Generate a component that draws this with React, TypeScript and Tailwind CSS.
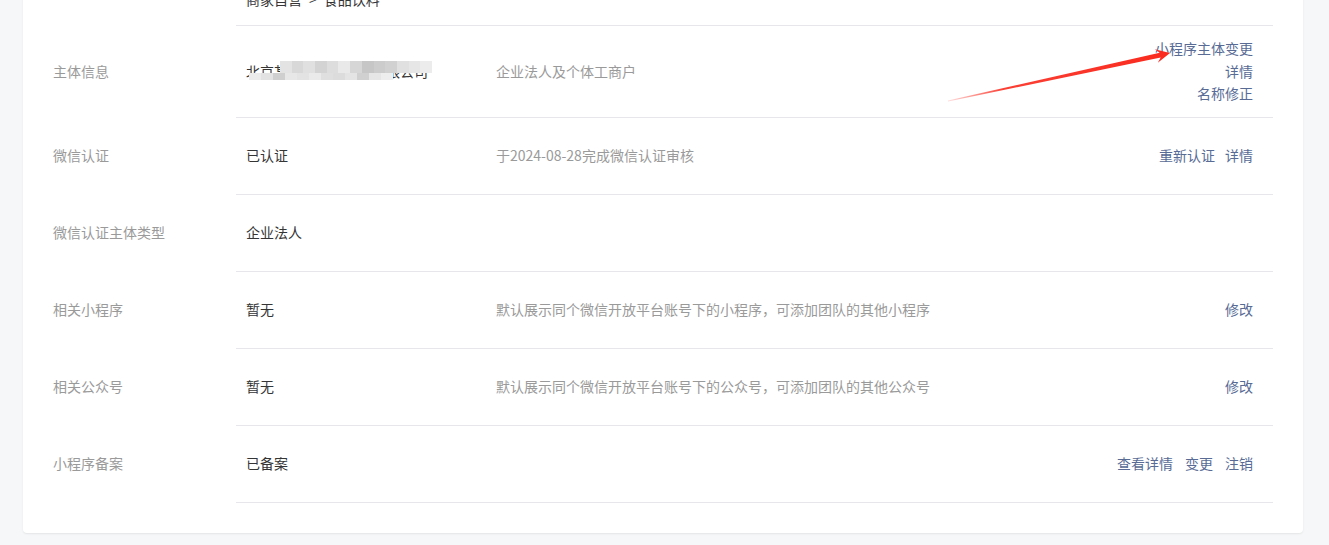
import React from "react";

const font = { fontFamily: '"Noto Sans CJK SC", "Noto Sans", sans-serif' };

function Row({
  label,
  value,
  desc,
  actions,
  className = "h-[77px]",
  children,
}: {
  label?: string;
  value?: React.ReactNode;
  desc?: string;
  actions?: React.ReactNode;
  className?: string;
  children?: React.ReactNode;
}) {
  return (
    <div className={"flex " + className}>
      <div className="w-[213px] shrink-0 pl-[30px] pb-[2px] flex items-center text-[14px] text-[#9a9a9a]">
        {label}
      </div>
      <div className="flex-1 mr-[30px] border-b border-[#e7e7eb] pl-[10px] pr-[20px] pb-[1px] flex items-center">
        {children ?? (
          <>
            <div className="w-[250px] shrink-0 text-[14px] text-[#353535]">{value}</div>
            <div className="flex-1 text-[14px] text-[#9a9a9a]">{desc}</div>
            <div className="text-[14px] text-[#576b95] flex">{actions}</div>
          </>
        )}
      </div>
    </div>
  );
}

const mosaicTop = ["#e3e3e3", "#d8d8d8", "#e0e0e0", "#d3d3d3", "#dddddd", "#e9e9e9", "#d6d6d6", "#c6c6c6", "#cccccc", "#d1d1d1", "#e0e0e0", "#e6e6e6", "#ececec"];
const mosaicBot = ["#ebebeb", "#e2e2e2", "#cfcfcf", "#e7e7e7", "#e3e3e3", "#eaeaea", "#dfdfdf", "#dcdcdc", "#e4e4e4", "#d0d0d0", "#e6e6e6", "#eeeeee"];

export default function App() {
  return (
    <div className="relative h-[545px] w-[1329px] overflow-hidden bg-[#f6f7f9]" style={font}>
      <div className="ml-[23px] mt-[-40px] w-[1280px] rounded-[4px] bg-white pb-[30px] shadow-[0_1px_2px_rgba(0,0,0,0.08)]">
        <Row className="h-[66px]">
          <div className="self-start pt-[29px] text-[14px] leading-[20px] text-[#353535] flex">
            <span>商家自营</span>
            <span className="mx-[7px]">&gt;</span>
            <span>食品饮料</span>
          </div>
        </Row>
        <Row
          label="主体信息"
          className="h-[92px]"
          value={
            <div className="relative w-[190px] leading-[20px]">
              <span>北京某某某某某某某有限公司</span>
              <div className="absolute left-[3px] top-[0px] w-[183px] h-[19px]">
                <div className="flex ml-[31px] h-[12px]">
                  {mosaicTop.map((c, i) => (
                    <div key={i} className="w-[12px] h-full" style={{ background: c }} />
                  ))}
                </div>
                <div className="flex h-[7px]">
                  {mosaicBot.map((c, i) => (
                    <div key={i} className="w-[12px] h-full" style={{ background: c }} />
                  ))}
                </div>
              </div>
            </div>
          }
          desc="企业法人及个体工商户"
          actions={
            <div className="flex flex-col items-end leading-[22.5px]">
              <span>小程序主体变更</span>
              <span>详情</span>
              <span>名称修正</span>
            </div>
          }
        />
        <Row
          label="微信认证"
          value="已认证"
          desc="于2024-08-28完成微信认证审核"
          actions={
            <>
              <span>重新认证</span>
              <span className="ml-[10px]">详情</span>
            </>
          }
        />
        <Row label="微信认证主体类型" value="企业法人" />
        <Row
          label="相关小程序"
          value="暂无"
          desc="默认展示同个微信开放平台账号下的小程序，可添加团队的其他小程序"
          actions={<span>修改</span>}
        />
        <Row
          label="相关公众号"
          value="暂无"
          desc="默认展示同个微信开放平台账号下的公众号，可添加团队的其他公众号"
          actions={<span>修改</span>}
        />
        <Row
          label="小程序备案"
          value="已备案"
          actions={
            <>
              <span>查看详情</span>
              <span className="ml-[12px]">变更</span>
              <span className="ml-[12px]">注销</span>
            </>
          }
        />
      </div>
      <svg className="pointer-events-none absolute left-0 top-0" width="1329" height="545">
        <defs>
          <linearGradient id="ag" x1="948" y1="101" x2="1170" y2="53" gradientUnits="userSpaceOnUse">
            <stop offset="0" stopColor="#fa2a1e" stopOpacity="0.15" />
            <stop offset="0.25" stopColor="#fa2a1e" stopOpacity="0.9" />
            <stop offset="1" stopColor="#fa2a1e" />
          </linearGradient>
        </defs>
        <polygon
          points="948,101.5 1160.7,57.5 1157.8,62.8 1170,53 1154.8,49.2 1159.7,52.7 948,100.5"
          fill="url(#ag)"
        />
      </svg>
    </div>
  );
}
